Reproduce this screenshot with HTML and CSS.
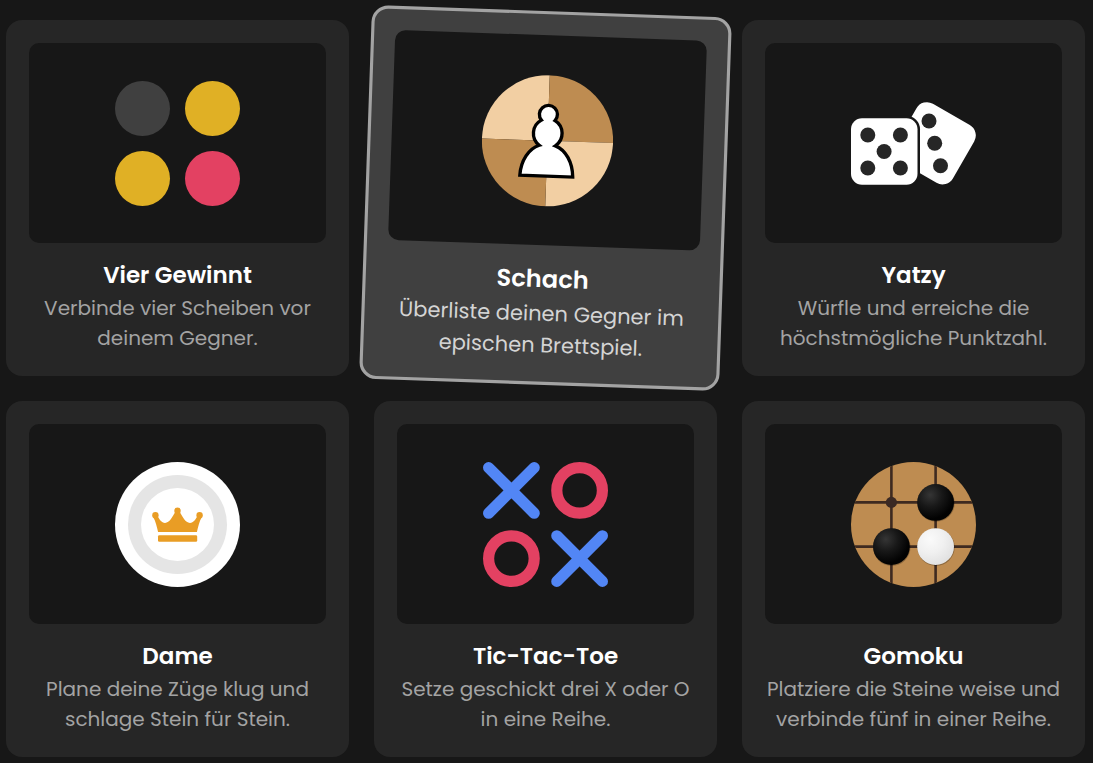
FILE: index.html
```html
<!DOCTYPE html>
<html lang="de">
<head>
<meta charset="utf-8">
<meta name="viewport" content="width=device-width, initial-scale=1">
<title>Spiele</title>
<link rel="stylesheet" href="styles.css">
</head>
<body>
<main class="games">
  <a class="card" href="#vier-gewinnt">
    <div class="preview">
      <svg class="icon" viewBox="0 0 125 125" aria-hidden="true">
        <circle cx="27.5" cy="27.5" r="27.5" fill="#404040"/>
        <circle cx="97.5" cy="27.5" r="27.5" fill="#e0b025"/>
        <circle cx="27.5" cy="97.5" r="27.5" fill="#e0b025"/>
        <circle cx="97.5" cy="97.5" r="27.5" fill="#e34162"/>
      </svg>
    </div>
    <h2 class="title">Vier Gewinnt</h2>
    <p class="text">Verbinde vier Scheiben vor deinem Gegner.</p>
  </a>

  <a class="card card-active" href="#schach">
    <div class="preview">
      <svg class="icon" viewBox="0 0 125 125" aria-hidden="true">
        <path d="M62.5 62.5H0A62.5 62.5 0 0 1 62.5 0Z" fill="#f2cfa3"/>
        <path d="M62.5 62.5V0A62.5 62.5 0 0 1 125 62.5Z" fill="#be8c51"/>
        <path d="M62.5 62.5H125A62.5 62.5 0 0 1 62.5 125Z" fill="#f2cfa3"/>
        <path d="M62.5 62.5V125A62.5 62.5 0 0 1 0 62.5Z" fill="#be8c51"/>
        <path d="M37.3 96.2C37.8 82 45 70.5 54.8 67A14.3 14.3 0 0 1 56 43A8.6 8.6 0 1 1 69 43A14.3 14.3 0 0 1 70.2 67C80 70.5 87.2 82 87.7 96.2Z" fill="#fff" stroke="#000" stroke-width="3.2"/>
      </svg>
    </div>
    <h2 class="title">Schach</h2>
    <p class="text">Überliste deinen Gegner im epischen Brettspiel.</p>
  </a>

  <a class="card" href="#yatzy">
    <div class="preview">
      <svg class="icon" viewBox="0 0 125 125" aria-hidden="true">
        <rect x="50.4" y="29" width="66.6" height="66.6" rx="12" fill="#fff" transform="rotate(30 83.7 62.3)"/>
        <g fill="#262626">
          <circle cx="78" cy="40" r="7.5"/>
          <circle cx="83.7" cy="62.3" r="7.5"/>
          <circle cx="89.5" cy="84.7" r="7.5"/>
        </g>
        <rect x="-2.4" y="34.7" width="71.4" height="71.4" rx="13.5" fill="#171717"/>
        <rect x="0" y="37.3" width="66.5" height="66.5" rx="11" fill="#fff"/>
        <g fill="#262626">
          <circle cx="16.8" cy="54" r="7.5"/>
          <circle cx="49.4" cy="54" r="7.5"/>
          <circle cx="33.1" cy="70.5" r="7.5"/>
          <circle cx="16.8" cy="87" r="7.5"/>
          <circle cx="49.4" cy="87" r="7.5"/>
        </g>
      </svg>
    </div>
    <h2 class="title">Yatzy</h2>
    <p class="text">Würfle und erreiche die höchstmögliche Punktzahl.</p>
  </a>

  <a class="card" href="#dame">
    <div class="preview">
      <svg class="icon" viewBox="0 0 125 125" aria-hidden="true">
        <circle cx="62.5" cy="62.5" r="62.5" fill="#fff"/>
        <circle cx="62.5" cy="62.5" r="49.5" fill="#e5e5e5"/>
        <circle cx="62.5" cy="62.5" r="36.5" fill="#fff"/>
        <g fill="#e99d25">
          <circle cx="40.4" cy="53.2" r="3.2"/>
          <circle cx="62.5" cy="48.8" r="3.2"/>
          <circle cx="84.6" cy="53.2" r="3.2"/>
          <path d="M38.4 55.4L42.5 54C44.5 57.5 46.5 60.6 50 60.9C54.500 61 57.500 54.500 60 50.500H65C67.500 54.500 70.500 61 75 60.900C78.500 60.600 80.500 57.500 82.500 54L86.600 55.400C84.500 59 83 65 81.900 70H43.100C42 65 40.500 59 38.400 55.400Z"/>
          <rect x="43" y="73.3" width="39.2" height="6.4" rx="1.3"/>
        </g>
      </svg>
    </div>
    <h2 class="title">Dame</h2>
    <p class="text">Plane deine Züge klug und schlage Stein für Stein.</p>
  </a>

  <a class="card" href="#tic-tac-toe">
    <div class="preview">
      <svg class="icon" viewBox="0 0 125 125" aria-hidden="true">
        <g fill="none" stroke-width="11.2" stroke-linecap="round">
          <path d="M5.6 5.6L51.2 51.2M51.2 5.6L5.6 51.2" stroke="#5286f5"/>
          <path d="M73.8 73.8L119.4 119.4M119.4 73.8L73.8 119.4" stroke="#5286f5"/>
          <circle cx="96.6" cy="28.4" r="22.8" stroke="#e34162"/>
          <circle cx="28.4" cy="96.6" r="22.8" stroke="#e34162"/>
        </g>
      </svg>
    </div>
    <h2 class="title">Tic-Tac-Toe</h2>
    <p class="text">Setze geschickt drei X oder O in eine Reihe.</p>
  </a>

  <a class="card" href="#gomoku">
    <div class="preview">
      <svg class="icon" viewBox="0 0 125 125" aria-hidden="true">
        <defs>
          <clipPath id="board"><circle cx="62.5" cy="62.5" r="62.5"/></clipPath>
          <radialGradient id="black" cx="0.35" cy="0.3" r="0.65">
            <stop offset="0" stop-color="#353535"/>
            <stop offset="0.5" stop-color="#181818"/>
            <stop offset="1" stop-color="#020202"/>
          </radialGradient>
          <radialGradient id="white" cx="0.35" cy="0.3" r="0.75">
            <stop offset="0" stop-color="#fafafa"/>
            <stop offset="0.5" stop-color="#f0f0f0"/>
            <stop offset="1" stop-color="#e0e0e0"/>
          </radialGradient>
        </defs>
        <g clip-path="url(#board)">
          <rect width="125" height="125" fill="#be8c51"/>
          <path d="M40.4 0V125M84.6 0V125M0 40.4H125M0 84.6H125" stroke="#3e2a20" stroke-width="2.6"/>
        </g>
        <circle cx="40.4" cy="40.4" r="5.6" fill="#3b2923"/>
        <g fill="#000" fill-opacity="0.25">
          <circle cx="85" cy="41" r="18.7"/>
          <circle cx="40.8" cy="85.2" r="18.7"/>
          <circle cx="85" cy="85.2" r="18.7"/>
        </g>
        <circle cx="84.6" cy="40.4" r="18.4" fill="url(#black)"/>
        <circle cx="40.4" cy="84.6" r="18.4" fill="url(#black)"/>
        <circle cx="84.6" cy="84.6" r="18.4" fill="url(#white)"/>
      </svg>
    </div>
    <h2 class="title">Gomoku</h2>
    <p class="text">Platziere die Steine weise und verbinde fünf in einer Reihe.</p>
  </a>
</main>
</body>
</html>
```

FILE: styles.css
```css
* {
  box-sizing: border-box;
}

body {
  margin: 0;
  background: #171717;
  color: #fff;
  font-family: Poppins, Inter, "Open Sans", sans-serif;
}

.games {
  display: grid;
  grid-template-columns: repeat(3, minmax(0, 1fr));
  gap: 25px;
  padding: 20px 8px 6px 6px;
}

.card {
  display: flex;
  flex-direction: column;
  padding: 20px;
  border: 3px solid transparent;
  border-radius: 16px;
  background: #262626;
  color: #a3a3a3;
  text-align: center;
  text-decoration: none;
}

.card-active {
  z-index: 1;
  border-color: #a3a3a3;
  background: #404040;
  color: #d4d4d4;
  transform: rotate(2deg) scale(1.05);
}

.preview {
  display: flex;
  align-items: center;
  justify-content: center;
  height: 200px;
  margin-bottom: 14px;
  border-radius: 10px;
  background: #171717;
}

.icon {
  width: 125px;
  height: 125px;
}

.title {
  margin: 0;
  color: #fff;
  font-size: 23px;
  font-weight: 600;
  line-height: 36px;
}

.text {
  margin: 0;
  font-size: 20px;
  line-height: 30px;
}
```
